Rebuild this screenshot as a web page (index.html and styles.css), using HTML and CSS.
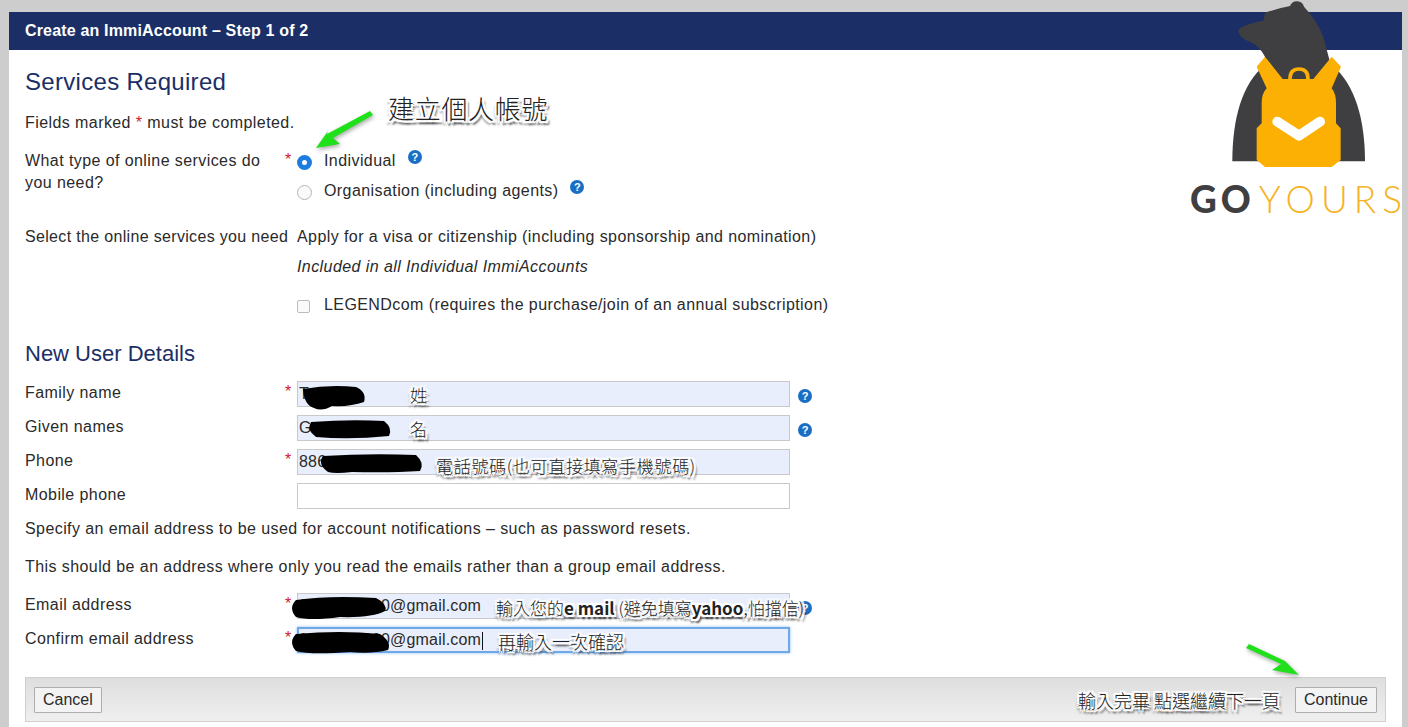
FILE: index.html
```html
<!DOCTYPE html>
<html>
    <head>
        <meta charset="utf-8">
        <title>Create an ImmiAccount</title>
        <link rel="stylesheet" href="styles.css">
    </head>
    <body>
        <div class="panel">
            <div class="panel_title">Create an ImmiAccount – Step 1 of 2</div>

            <div class="panel_body">
                <h2 class="heading_main">Services Required</h2>
                <p class="note">Fields marked <span class="star_inline">*</span> must be completed.</p>

                <!--Services-->
                <div class="row row_services">
                    <div class="label">What type of online services do you need?</div>
                    <div class="star">*</div>
                    <div class="options">
                        <div class="option">
                            <span class="radio radio_on"></span>
                            <span class="option_text">Individual</span>
                            <span class="help help_near">?</span>
                        </div>
                        <div class="option">
                            <span class="radio"></span>
                            <span class="option_text">Organisation (including agents)</span>
                            <span class="help help_near">?</span>
                        </div>
                    </div>
                </div>

                <div class="row row_select">
                    <div class="label label_nowrap">Select the online services you need</div>
                    <div class="star"></div>
                    <div class="plain">Apply for a visa or citizenship (including sponsorship and nomination)</div>
                </div>
                <div class="row row_included">
                    <div class="label"></div>
                    <div class="star"></div>
                    <div class="plain"><em>Included in all Individual ImmiAccounts</em></div>
                </div>
                <div class="row row_legend">
                    <div class="label"></div>
                    <div class="star"></div>
                    <div class="option">
                        <span class="checkbox"></span>
                        <span class="option_text">LEGENDcom (requires the purchase/join of an annual subscription)</span>
                    </div>
                </div>

                <h3 class="heading_sub">New User Details</h3>

                <!--User details-->
                <div class="fields">
                    <div class="row">
                        <div class="label">Family name</div>
                        <div class="star">*</div>
                        <input class="field field_filled" value="T">
                        <span class="help">?</span>
                    </div>
                    <div class="row">
                        <div class="label">Given names</div>
                        <div class="star"></div>
                        <input class="field field_filled" value="G">
                        <span class="help">?</span>
                    </div>
                    <div class="row">
                        <div class="label">Phone</div>
                        <div class="star">*</div>
                        <input class="field field_filled" value="886">
                    </div>
                    <div class="row">
                        <div class="label">Mobile phone</div>
                        <div class="star"></div>
                        <input class="field">
                    </div>
                </div>

                <p class="hint hint_first">Specify an email address to be used for account notifications – such as password resets.</p>
                <p class="hint hint_second">This should be an address where only you read the emails rather than a group email address.</p>

                <div class="fields fields_email">
                    <div class="row">
                        <div class="label">Email address</div>
                        <div class="star">*</div>
                        <input class="field field_filled" value="0000000000@gmail.com">
                        <span class="help">?</span>
                    </div>
                    <div class="row">
                        <div class="label">Confirm email address</div>
                        <div class="star">*</div>
                        <input class="field field_focus" value="0000000000@gmail.com">
                    </div>
                </div>

                <div class="footer">
                    <button class="button">Cancel</button>
                    <button class="button">Continue</button>
                </div>
            </div>
        </div>

        <!--Annotations drawn on top of the screenshot-->
        <svg class="marks" viewBox="0 0 1408 727">
            <path class="blob" d="M303 389 Q330 384 356 387 Q367 392 364 402 Q350 407 332 406 Q322 412 314 408 Q304 405 303 389Z"/>
            <path class="blob" d="M311 422 Q350 419 384 421 Q393 428 389 436 Q350 440 316 437 Q306 430 311 422Z"/>
            <path class="blob" d="M323 456 Q370 453 416 455 Q425 463 420 471 Q390 473 352 472 Q335 474 328 472 Q317 464 323 456Z"/>
            <path class="blob" d="M296 600 Q330 595 376 598 Q388 604 385 611 Q372 618 340 617 Q310 621 296 617 Q288 608 296 600Z"/>
            <path class="blob" d="M296 634 Q340 630 380 634 Q392 642 388 650 Q372 654 350 652 Q310 655 296 651 Q288 642 296 634Z"/>
            <polygon class="arrow" points="316,148 340,144 333,138 373,115 370,111 327,134 328,131"/>
            <polygon class="arrow" points="1299,675 1272,670 1281,664 1246,648 1249,644 1285,661 1280,656"/>
        </svg>

        <div class="caret"></div>

        <div class="tag tag_account">建立個人帳號</div>
        <div class="tag tag_family">姓</div>
        <div class="tag tag_given">名</div>
        <div class="tag tag_phone">電話號碼(也可直接填寫手機號碼)</div>
        <div class="tag tag_email">輸入您的<b>e mail</b> (避免填寫<b>yahoo</b>,怕擋信)</div>
        <div class="tag tag_confirm">再輸入一次確認</div>
        <div class="tag tag_next">輸入完畢 點選繼續下一頁</div>

        <!--Logo-->
        <svg class="logo" viewBox="0 0 774 675">
            <path class="logo_dark" d="M247 484 C247 360 275 250 345 195 L545 195 C615 250 645 360 645 484Z"/>
            <path class="logo_dark" d="M345 38 Q390 24 420 18 A22 22 0 0 1 462 20 Q500 60 520 110 L537 175 L550 245 L340 245 L345 170 Q330 140 300 125 Q268 115 265 92 Q270 75 340 62Z"/>
            <path class="logo_yellow" d="M320 200 L345 170 L398 237 L490 237 L545 170 L573 200 L545 265 Q558 280 558 310 L558 370 L572 385 L572 480 L545 501 L345 501 L320 480 L320 385 L335 370 L335 310 Q335 280 350 265Z"/>
            <path class="logo_handle" d="M420 237 Q420 207 447 207 Q474 207 474 237"/>
            <path class="logo_check" d="M382 365 L447 407 L510 365"/>
        </svg>
        <div class="logo_text"><span class="logo_go">GO</span><span class="logo_yours">YOURS</span></div>
    </body>
</html>
```

FILE: styles.css
```css
html,body{
    border:0;
    margin:0;
    padding:0;
    height:727px;
    overflow:hidden;
}

body{
    position:relative;
    background:#cdcdcd;
    font-family:"Liberation Sans", Arial, sans-serif;
    font-size:16px;
    line-height:22px;
    color:#2a2a2a;
}

.panel{
    margin:12px 6px 0 9px;
    height:715px;
    background:#fff;
}

.panel_title{
    height:38px;
    line-height:38px;
    padding-left:16px;
    background:#1b2f66;
    color:#fff;
    font-size:16px;
    font-weight:bold;
    letter-spacing:0.17px;
}

.panel_body{
    padding:0 16px;
}

.heading_main{
    margin:16px 0 0;
    height:32px;
    line-height:32px;
    font-size:24px;
    font-weight:normal;
    letter-spacing:0.3px;
    color:#1b2f66;
}

.heading_sub{
    margin:25px 0 0;
    height:28px;
    line-height:28px;
    font-size:22px;
    font-weight:normal;
    color:#1b2f66;
}

.note{
    margin:13px 0 0;
}

.star_inline, .star{
    color:#d0202a;
}

.note, .hint, .label, .plain, .option_text{
    padding-top:1px;
    letter-spacing:0.42px;
}

.row{
    display:grid;
    grid-template-columns:260px 12px 493px auto;
    align-items:start;
}

.row_services{margin-top:15px;}
.row_select{margin-top:24px;}
.row_included{margin-top:7px;}
.row_legend{margin-top:15px;}

.label_nowrap{
    white-space:nowrap;
    letter-spacing:0.33px;
}

.plain{
    white-space:nowrap;
}

.options{
    display:flex;
    flex-direction:column;
    gap:8px;
}

.option{
    display:flex;
    align-items:flex-start;
    gap:12px;
    height:22px;
    white-space:nowrap;
}

.radio{
    flex:none;
    box-sizing:border-box;
    width:15px;
    height:15px;
    margin-top:6px;
    border:1px solid #b5b5b5;
    border-radius:50%;
    background:#fafafa;
}

.radio_on{
    border:5px solid #1c7ce0;
    background:#fff;
}

.checkbox{
    flex:none;
    box-sizing:border-box;
    width:13px;
    height:13px;
    margin:7px 2px 0 0;
    border:1px solid #bcbcbc;
    border-radius:2px;
    background:#fafafa;
}

.help{
    flex:none;
    width:14px;
    height:14px;
    margin:8px 0 0 8px;
    border-radius:50%;
    background:#1a6fc4;
    color:#fff;
    font-size:11px;
    font-weight:bold;
    line-height:14px;
    text-align:center;
}

.help_near{
    margin:1px 0 0 0;
}

.fields{
    display:flex;
    flex-direction:column;
    gap:8px;
    margin-top:13px;
}

.fields_email{
    margin-top:15px;
}

.field{
    box-sizing:border-box;
    width:493px;
    height:26px;
    padding:0 1px;
    border:1px solid #c9c9c9;
    border-radius:0;
    outline:0;
    background:#fff;
    font-family:"Liberation Sans", Arial, sans-serif;
    font-size:16px;
    letter-spacing:0.2px;
    color:#2a2a2a;
}

.field_filled{
    background:#e8eefb;
}

.field_focus{
    background:#e8eefb;
    border:2px solid #6fa8e8;
    padding:0;
    box-shadow:0 0 3px #8fbdf0;
}

.hint{
    margin:0;
}

.hint_first{margin-top:8px;}
.hint_second{margin-top:15px;}

.footer{
    box-sizing:border-box;
    display:flex;
    justify-content:space-between;
    align-items:center;
    height:45px;
    margin-top:24px;
    padding:0 8px;
    border:1px solid #cfcfcf;
    background:linear-gradient(#dedede, #efefef);
}

.button{
    height:26px;
    padding:0 8px;
    border:1px solid #aeaeae;
    border-radius:1px;
    background:#f3f3f3;
    font-family:"Liberation Sans", Arial, sans-serif;
    font-size:16px;
    color:#2a2a2a;
}

/* everything below sits on top of the form */
.marks{
    position:absolute;
    top:0;
    left:0;
    width:1408px;
    height:727px;
    pointer-events:none;
}

.blob{
    fill:#000;
}

.arrow{
    fill:#1fe01a;
    filter:drop-shadow(1px 2px 2px rgba(0,0,0,0.35));
}

.caret{
    position:absolute;
    top:632px;
    left:482px;
    width:1px;
    height:18px;
    background:#111;
}

.tag{
    position:absolute;
    white-space:nowrap;
    font-family:"Noto Sans CJK TC", "Liberation Sans", sans-serif;
    font-weight:300;
    color:#222;
    text-shadow:2px 0 0 #fff, -2px 0 0 #fff, 0 2px 0 #fff, 0 -2px 0 #fff,
        2px 2px 0 #fff, -2px -2px 0 #fff, 2px -2px 0 #fff, -2px 2px 0 #fff,
        3px 4px 2px rgba(0,0,0,0.7), -2px 4px 2px rgba(0,0,0,0.45);
}

.tag b{
    font-weight:bold;
}

.tag_account{left:388px;top:92px;font-size:26px;line-height:32px;letter-spacing:0.7px;}
.tag_family{left:410px;top:384px;font-size:17px;}
.tag_given{left:410px;top:418px;font-size:17px;}
.tag_phone{left:436px;top:455px;font-size:17px;letter-spacing:0.7px;}
.tag_email{left:496px;top:597px;font-size:17px;}
.tag_confirm{left:498px;top:630px;font-size:18px;}
.tag_next{left:1078px;top:689px;font-size:18px;}

.logo{
    position:absolute;
    top:0;
    left:1150px;
    width:258px;
    height:225px;
}

.logo_dark{fill:#3f3f41;}
.logo_yellow{fill:#fbb003;}

.logo_handle{
    fill:none;
    stroke:#fbb003;
    stroke-width:11;
}

.logo_check{
    fill:none;
    stroke:#fff;
    stroke-width:30;
    stroke-linecap:round;
    stroke-linejoin:round;
}

.logo_text{
    position:absolute;
    top:178px;
    left:1190px;
    font-family:Lato, "Liberation Sans", sans-serif;
    font-size:37px;
    line-height:42px;
    white-space:nowrap;
}

.logo_go{
    font-weight:900;
    letter-spacing:4px;
    color:#3f3f41;
}

.logo_yours{
    margin-left:4px;
    font-weight:300;
    letter-spacing:6px;
    color:#f5b324;
}
```
